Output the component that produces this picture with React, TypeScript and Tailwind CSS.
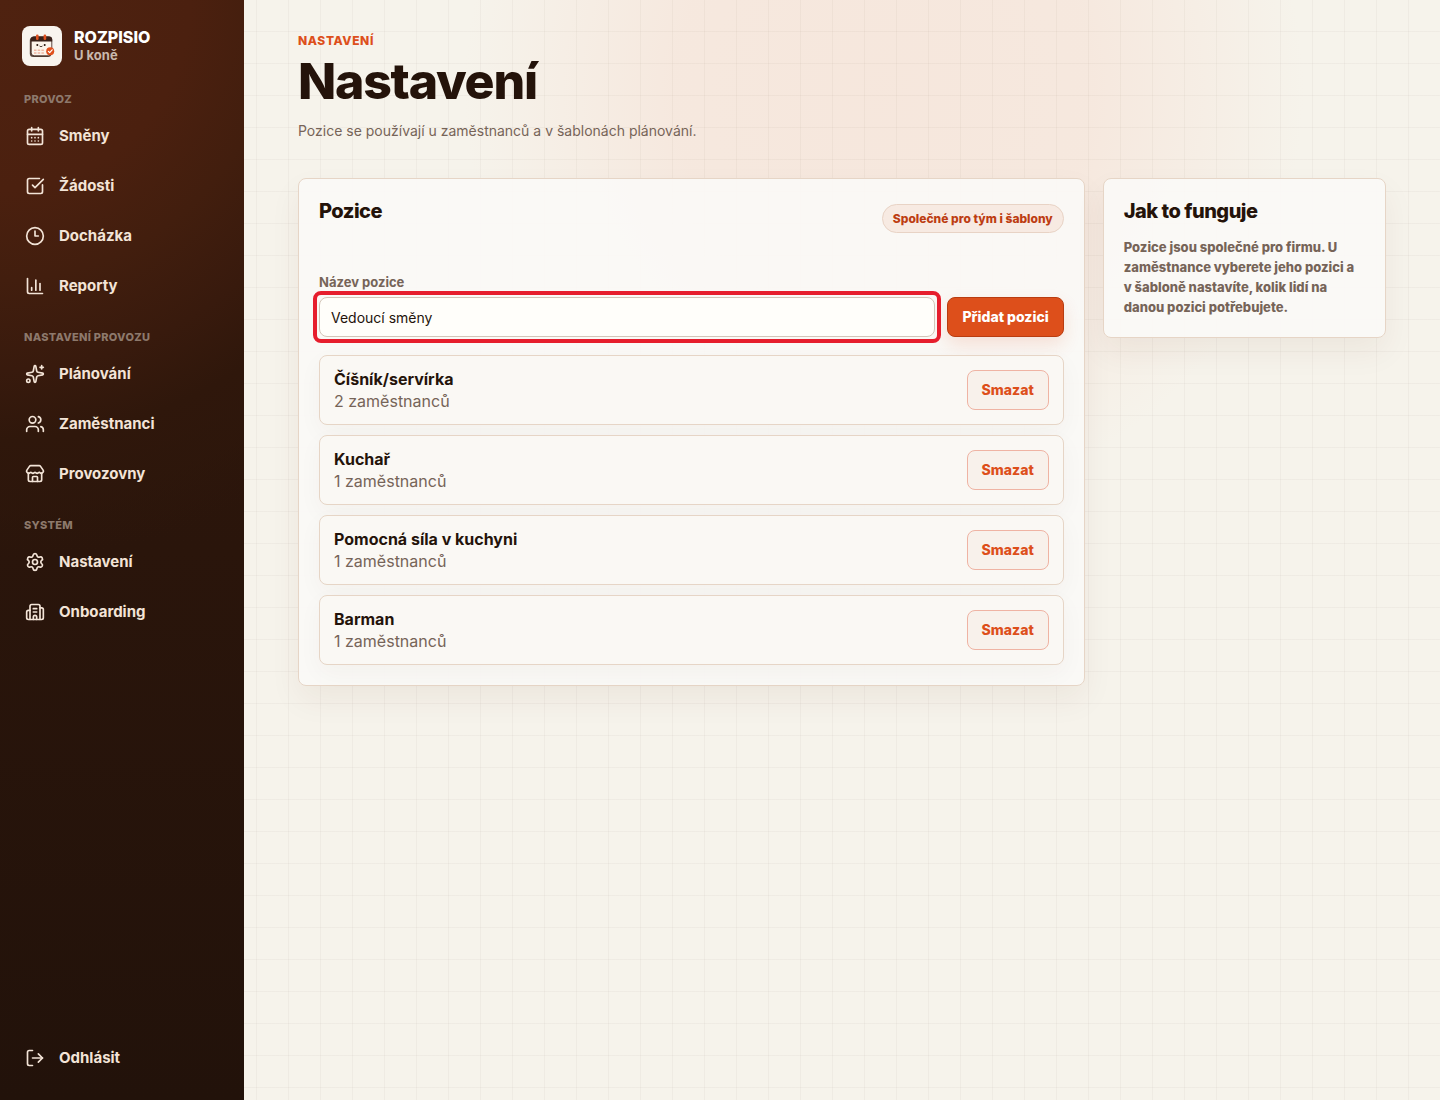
import { useState } from 'react';
import {
  Building2,
  CalendarDays,
  ChartColumn,
  Clock3,
  LogOut,
  Settings,
  Sparkles,
  SquareCheckBig,
  Store,
  Users,
  type LucideIcon,
} from 'lucide-react';

interface NavItem {
  label: string;
  icon: LucideIcon;
}

interface NavGroup {
  title: string;
  items: NavItem[];
}

const NAV: NavGroup[] = [
  {
    title: 'Provoz',
    items: [
      { label: 'Směny', icon: CalendarDays },
      { label: 'Žádosti', icon: SquareCheckBig },
      { label: 'Docházka', icon: Clock3 },
      { label: 'Reporty', icon: ChartColumn },
    ],
  },
  {
    title: 'Nastavení provozu',
    items: [
      { label: 'Plánování', icon: Sparkles },
      { label: 'Zaměstnanci', icon: Users },
      { label: 'Provozovny', icon: Store },
    ],
  },
  {
    title: 'Systém',
    items: [
      { label: 'Nastavení', icon: Settings },
      { label: 'Onboarding', icon: Building2 },
    ],
  },
];

const POSITIONS = [
  { name: 'Číšník/servírka', count: 2 },
  { name: 'Kuchař', count: 1 },
  { name: 'Pomocná síla v kuchyni', count: 1 },
  { name: 'Barman', count: 1 },
];

function Logo() {
  return (
    <svg viewBox="0 0 40 40" className="size-10 shrink-0 rounded-lg bg-[#f8f4ee]" aria-hidden="true">
      <rect x="7.8" y="11" width="21.500" height="20" rx="3.500" fill="#5a463c" />
      <rect x="9.200" y="10.800" width="20.600" height="19" rx="3" fill="#fbf3ea" stroke="#3a2119" strokeWidth=".8" />
      <path d="M8.800 15.500v-2a3 3 0 0 1 3-3h15.400a3 3 0 0 1 3 3v2z" fill="#3a2119" />
      <rect x="14" y="8.500" width="2.600" height="5.500" rx="1.300" fill="#e0501d" />
      <rect x="21.600" y="8.500" width="2.600" height="5.500" rx="1.300" fill="#e0501d" />
      <circle cx="15.300" cy="19" r="1" fill="#24130a" />
      <circle cx="22.700" cy="19" r="1" fill="#24130a" />
      <path d="M17.800 20.300q1.200 1.200 2.400 0" fill="none" stroke="#24130a" strokeWidth=".8" strokeLinecap="round" />
      <path d="M12 24.300h11M12 27h11" stroke="#f0b8a4" strokeWidth="1.500" strokeDasharray="2.500 1.200" />
      <circle cx="28.200" cy="25.200" r="4" fill="#e0501d" />
      <path
        d="m26.400 25.300 1.300 1.300 2.500-2.800"
        fill="none"
        stroke="#fff"
        strokeWidth="1.200"
        strokeLinecap="round"
        strokeLinejoin="round"
      />
    </svg>
  );
}

function NavLink({ label, icon: Icon }: NavItem) {
  return (
    <a href="#" className="flex h-11 items-center gap-3.5 rounded-lg px-[11px] text-[15px] font-bold text-[#f3e4d7]">
      <Icon size={20} strokeWidth={2} className="shrink-0" />
      {label}
    </a>
  );
}

function Sidebar() {
  return (
    <aside className="flex w-[244px] shrink-0 flex-col bg-[radial-gradient(circle_at_0%_0%,#4f2210_0px,#4b200f_190px,#421e0e_280px,#381a0d_370px,#2f170b_440px,transparent_560px),linear-gradient(#32180c,#2a150b_50%,#22120a)] px-3.5 pt-[26px] pb-5">
      <div className="flex items-center gap-3 px-2">
        <Logo />
        <div className="pb-0.5">
          <div className="text-base leading-5 font-extrabold text-white">ROZPISIO</div>
          <div className="text-[13px] leading-4 font-bold text-[#c9b8ac]">U koně</div>
        </div>
      </div>

      <nav className="mt-[26px] flex flex-col gap-[22px]">
        {NAV.map((group) => (
          <div key={group.title}>
            <h2 className="px-2.5 text-[11px] leading-3.5 font-extrabold tracking-wide text-[#8d796c] uppercase">
              {group.title}
            </h2>
            <div className="mt-2 flex flex-col gap-1.5">
              {group.items.map((item) => (
                <NavLink key={item.label} {...item} />
              ))}
            </div>
          </div>
        ))}
      </nav>

      <div className="mt-auto">
        <NavLink label="Odhlásit" icon={LogOut} />
      </div>
    </aside>
  );
}

function PositionsCard() {
  const [name, setName] = useState('Vedoucí směny');

  return (
    <section className="rounded-lg border border-[#e6d5c6] bg-[#fbfaf7]/90 p-5 shadow-[0_14px_32px_rgba(80,40,15,0.06)]">
      <div className="flex h-[39px] items-center justify-between">
        <h2 className="self-start text-xl leading-6 font-extrabold tracking-tight">Pozice</h2>
        <span className="rounded-full border border-[#e8d3c5] bg-[#f7eae2] px-2.5 py-1.5 text-xs leading-[15px] font-extrabold text-[#bd3d12]">
          Společné pro tým i šablony
        </span>
      </div>

      <form className="mt-9 flex items-end gap-3" onSubmit={(e) => e.preventDefault()}>
        <div className="flex grow flex-col gap-1.5">
          <label htmlFor="position-name" className="text-[13px] leading-[17px] font-bold text-[#766458]">
            Název pozice
          </label>
          <div className="relative">
            <input
              id="position-name"
              value={name}
              onChange={(e) => setName(e.target.value)}
              className="block h-10 w-full rounded-lg border border-[#d3c5b8] bg-[#fffefa] px-[11px] text-sm outline-none"
            />
            {/* Highlight ring */}
            <div className="pointer-events-none absolute -inset-1.5 rounded-lg border-4 border-[#e61e2d]" />
          </div>
        </div>
        <button
          type="submit"
          className="h-10 rounded-lg border border-[#b93c10] bg-[#dd4f1b] px-3.5 text-sm font-extrabold text-white shadow-[0_8px_18px_rgba(221,79,27,0.14)]"
        >
          Přidat pozici
        </button>
      </form>

      <ul className="mt-[18px] flex flex-col gap-2.5">
        {POSITIONS.map((position) => (
          <li
            key={position.name}
            className="flex items-center justify-between rounded-lg border border-[#e6d5c6] bg-[#faf8f4] px-3.5 py-3 shadow-[0_8px_24px_rgba(80,40,15,0.04)]"
          >
            <div className="text-base leading-[22px]">
              <div className="font-bold">{position.name}</div>
              <div className="text-[#766458]">{position.count} zaměstnanců</div>
            </div>
            <button
              type="button"
              className="h-10 rounded-lg border border-[#efb3a3] bg-[#f8f1eb] px-3.5 text-sm font-extrabold text-[#dd4f1b]"
            >
              Smazat
            </button>
          </li>
        ))}
      </ul>
    </section>
  );
}

function HelpCard() {
  return (
    <aside className="rounded-lg border border-[#e6d5c6] bg-[#fbfaf7]/90 p-5 shadow-[0_14px_32px_rgba(80,40,15,0.06)]">
      <h2 className="text-xl leading-6 font-extrabold tracking-tight">Jak to funguje</h2>
      <p className="mt-3.5 text-[13px] leading-5 font-extrabold text-[#766458]">
        Pozice jsou společné pro firmu. U zaměstnance vyberete jeho pozici a v&nbsp;šabloně nastavíte, kolik lidí na
        danou pozici potřebujete.
      </p>
    </aside>
  );
}

export default function App() {
  return (
    <div className="flex min-h-screen bg-[#f6f3eb] font-['Inter',sans-serif] text-[#24130a]">
      <Sidebar />
      <main className="grow bg-[linear-gradient(90deg,rgba(60,30,10,0.035)_1px,transparent_1px),linear-gradient(rgba(60,30,10,0.035)_1px,transparent_1px),radial-gradient(ellipse_420px_420px_at_640px_90px,rgba(246,216,203,0.45),rgba(246,216,203,0.4)_50%,rgba(246,216,203,0))] bg-size-[32px_32px,32px_32px,auto] bg-position-[12px_0,0_31px,0_0] px-[54px] pt-8">
        <header>
          <p className="text-xs leading-[18px] font-extrabold tracking-wider text-[#dd4f1b] uppercase">Nastavení</p>
          <h1 className="mt-1 text-[50px] leading-[54px] font-extrabold tracking-tight">Nastavení</h1>
          <p className="mt-3 text-sm leading-[22px] text-[#766458]">
            Pozice se používají u zaměstnanců a v šablonách plánování.
          </p>
        </header>

        <div className="mt-9 grid grid-cols-[25fr_9fr] items-start gap-[18px]">
          <PositionsCard />
          <HelpCard />
        </div>
      </main>
    </div>
  );
}
